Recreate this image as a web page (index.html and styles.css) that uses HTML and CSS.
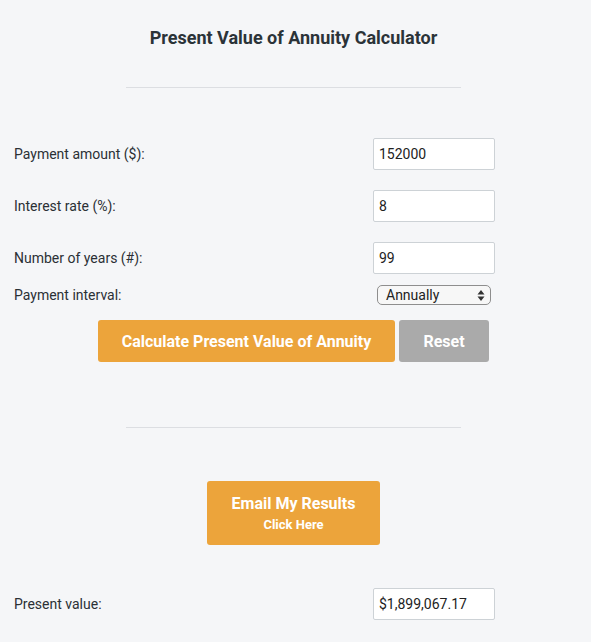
FILE: index.html
```html
<!DOCTYPE html>
<html>
<head>
<meta charset="utf-8">
<link rel="stylesheet" href="styles.css">
</head>
<body>
<div class="page">
  <h1 class="title">Present Value of Annuity Calculator</h1>
  <hr class="rule rule-top">
  <div class="form">
    <div class="row">
      <label class="label">Payment amount ($):</label>
      <div class="cell"><input class="field" type="text" value="152000"></div>
    </div>
    <div class="row">
      <label class="label">Interest rate (%):</label>
      <div class="cell"><input class="field" type="text" value="8"></div>
    </div>
    <div class="row">
      <label class="label">Number of years (#):</label>
      <div class="cell"><input class="field" type="text" value="99"></div>
    </div>
    <div class="row row-select">
      <label class="label">Payment interval:</label>
      <div class="cell">
        <div class="select">
          <span class="select-text">Annually</span>
          <svg class="select-arrows" width="8" height="13" viewBox="0 0 8 13"><path d="M4 1 L7.5 5.5 L0.5 5.5 Z M4 12 L7.5 7.5 L0.5 7.5 Z" fill="#333"/></svg>
        </div>
      </div>
    </div>
  </div>
  <div class="actions">
    <button class="btn btn-orange btn-calc">Calculate Present Value of Annuity</button>
    <button class="btn btn-grey btn-reset">Reset</button>
  </div>
  <hr class="rule rule-bottom">
  <div class="email-wrap">
    <button class="btn btn-orange btn-email"><span class="email-main">Email My Results</span><span class="email-sub">Click Here</span></button>
  </div>
  <div class="form result">
    <div class="row">
      <label class="label">Present value:</label>
      <div class="cell"><input class="field" type="text" value="$1,899,067.17"></div>
    </div>
  </div>
</div>
</body>
</html>
```
FILE: styles.css
```css
* { box-sizing: border-box; }
html, body { margin: 0; padding: 0; background: #f5f6f8; }
body { font-family: Roboto, "Liberation Sans", Arial, sans-serif; color: #2b3035; }
.page { width: 587px; }
.title {
  margin: 0;
  padding-top: 27px;
  text-align: center;
  font-size: 18px;
  font-weight: 700;
  line-height: 22px;
  color: #2b3338;
}
.rule {
  border: 0;
  border-top: 1px solid #dcdee2;
  width: 335px;
  margin: 0 auto;
}
.rule-top { margin-top: 38px; }
.form { padding-left: 14px; }
.form:not(.result) { margin-top: 50px; }
.row {
  display: flex;
  align-items: center;
  height: 32px;
  margin-bottom: 20px;
}
.row-select { height: 20px; margin-top: -9px; margin-bottom: 0; }
.label { width: 359px; font-size: 14px; color: #2b3035; }
.cell { width: 122px; display: flex; justify-content: center; }
.field {
  width: 122px;
  height: 32px;
  border: 1px solid #cdd2d6;
  border-radius: 2px;
  background: #fff;
  padding: 0 5px;
  font-family: Roboto, "Liberation Sans", Arial, sans-serif;
  font-size: 14px;
  color: #222;
  outline: none;
}
.select {
  position: relative;
  width: 114px;
  height: 20px;
  border: 1px solid #8e8e8e;
  border-radius: 5px;
  background: #f7f7f7;
  display: flex;
  align-items: center;
  padding-left: 8px;
  font-size: 14px;
  color: #222;
}
.select-arrows { position: absolute; right: 5px; top: 2.5px; }
.actions {
  display: flex;
  gap: 4px;
  padding-left: 98px;
  margin-top: 15px;
}
.btn {
  border: 0;
  border-radius: 3px;
  color: #fff;
  font-family: Roboto, "Liberation Sans", Arial, sans-serif;
  font-weight: 700;
  font-size: 16px;
  padding: 0;
  cursor: pointer;
}
.btn-orange { background: #eca43b; }
.btn-grey { background: #aaaaaa; }
.btn-calc { width: 297px; height: 42px; }
.btn-reset { width: 90px; height: 42px; }
.rule-bottom { margin-top: 65px; }
.email-wrap { display: flex; justify-content: center; margin-top: 53px; }
.btn-email {
  width: 173px;
  height: 64px;
  display: flex;
  flex-direction: column;
  align-items: center;
  justify-content: center;
  gap: 4px;
}
.email-main { font-size: 16px; line-height: 19px; }
.email-sub { font-size: 13px; line-height: 16px; }
.result { margin-top: 43px; }
```
